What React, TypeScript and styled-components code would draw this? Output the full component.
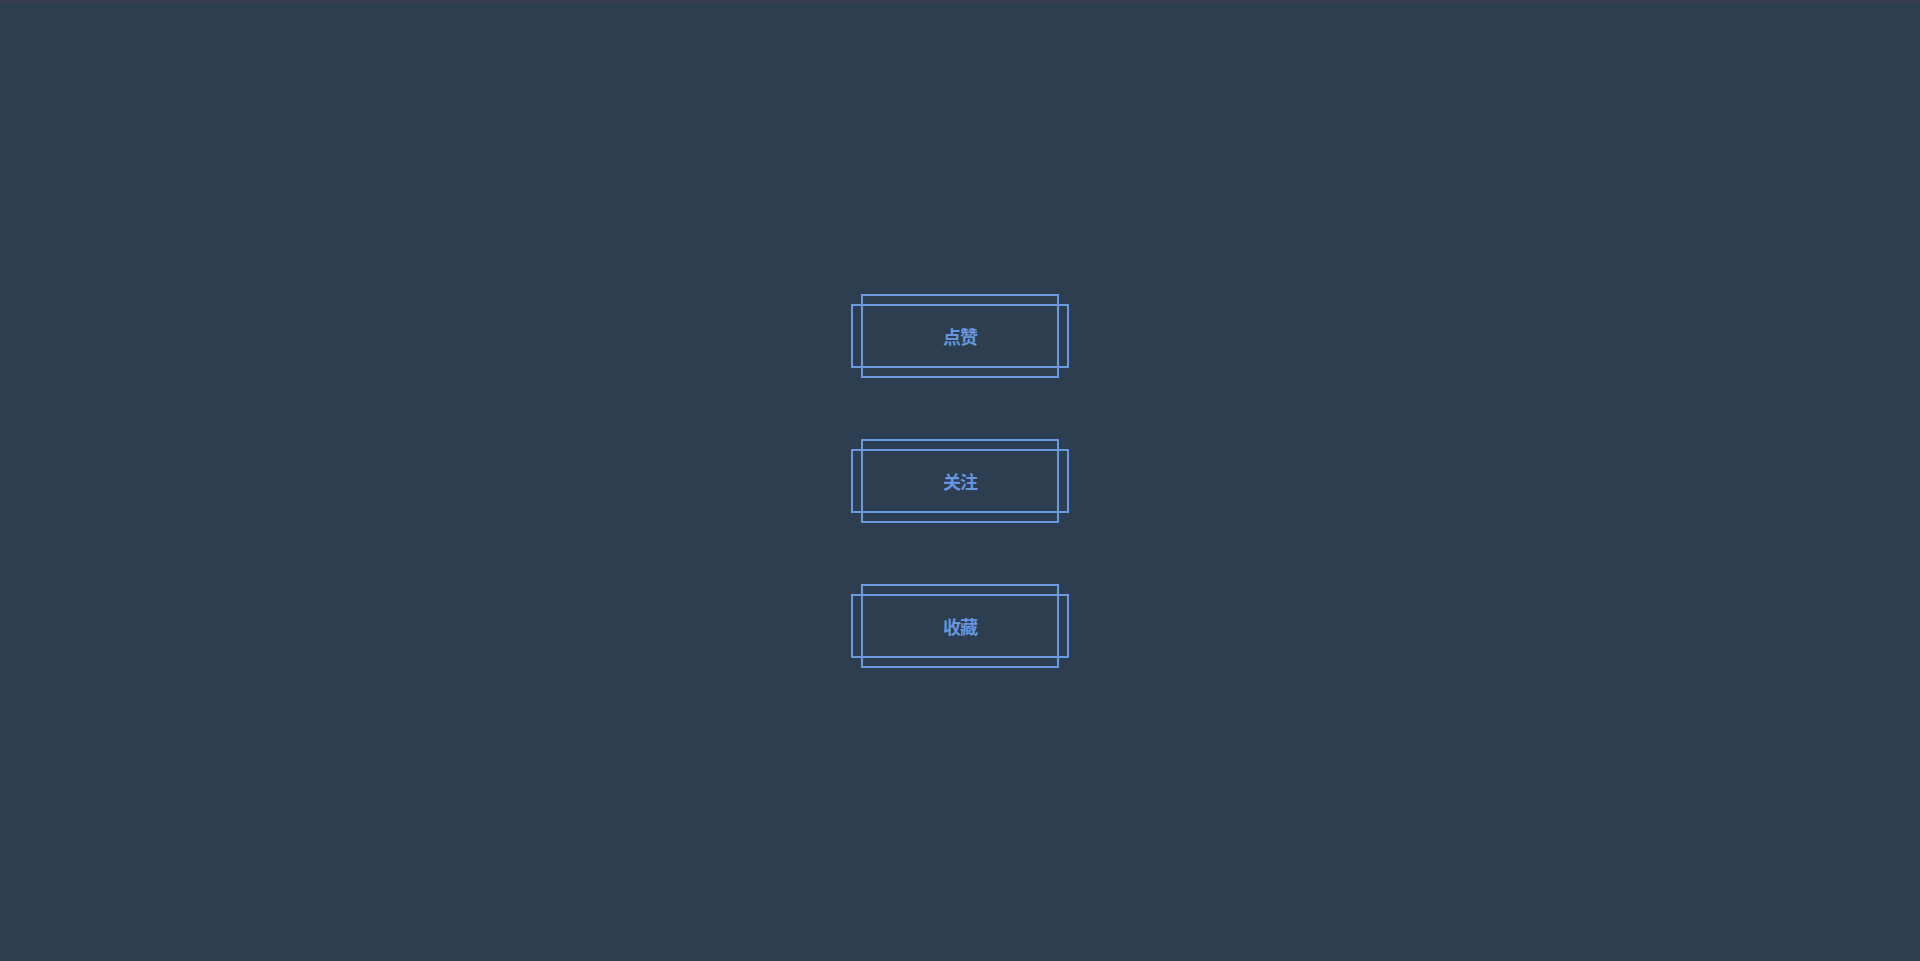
import React from "react";
import styled, { createGlobalStyle } from "styled-components";

const GlobalStyle = createGlobalStyle`
  html, body {
    margin: 0;
    padding: 0;
    height: 100%;
    background: #2c3e50;
  }
  #root {
    height: 100%;
  }
`;

const Page = styled.div`
  height: 100vh;
  box-shadow: inset 0 3px 0 #383c4e;
  background: #2c3e50;
  display: flex;
  flex-direction: column;
  align-items: center;
  justify-content: center;
  gap: 81px;
  font-family: "Noto Sans CJK SC", "Noto Sans", sans-serif;
`;

const FrameButton = styled.button`
  position: relative;
  width: 198px;
  height: 64px;
  padding: 0;
  border: none;
  background: transparent;
  color: #6596de;
  font-family: inherit;
  font-size: 18px;
  font-weight: 700;
  letter-spacing: -1px;
  cursor: pointer;

  &::before,
  &::after {
    content: "";
    position: absolute;
    box-sizing: border-box;
    border: 2px solid #6a9be2;
    pointer-events: none;
  }

  &::before {
    left: 0;
    right: 0;
    top: -10px;
    bottom: -10px;
  }

  &::after {
    left: -10px;
    right: -10px;
    top: 0;
    bottom: 0;
  }
`;

const labels = ["点赞", "关注", "收藏"];

const App = () => {
  return (
    <>
      <GlobalStyle />
      <Page>
        {labels.map((label) => (
          <FrameButton key={label}>{label}</FrameButton>
        ))}
      </Page>
    </>
  );
};

export default App;
